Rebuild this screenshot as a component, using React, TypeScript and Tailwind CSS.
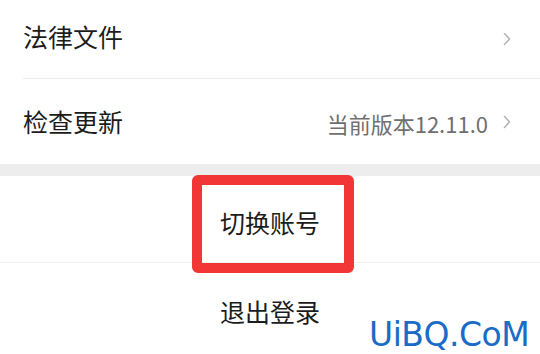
import React from "react";

const Chevron = () => (
  <svg width="8" height="14" viewBox="0 0 8 14" className="shrink-0">
    <path d="M1.5 1.5 L6.5 7 L1.5 12.5" fill="none" stroke="#b5b5b5" strokeWidth="1.6" strokeLinecap="round" strokeLinejoin="round" />
  </svg>
);

export default function App() {
  const font = { fontFamily: '"Noto Sans CJK SC", "Noto Sans", sans-serif' };
  return (
    <div className="w-[540px] h-[354px] bg-white overflow-hidden relative text-[#1c1c1c]" style={font}>
      <div className="flex flex-col">
        <div className="h-[78px] flex items-center pl-[23px] pr-[29px]">
          <span className="text-[25px] leading-none flex-1 pb-[6px]">法律文件</span>
          <Chevron />
        </div>
        <div className="ml-[23px] h-px bg-[#ececec]" />
        <div className="h-[85px] flex items-center pl-[23px] pr-[29px]">
          <span className="text-[25px] leading-none flex-1">检查更新</span>
          <span className="text-[22px] leading-none text-[#707070] mr-[15px] pt-[2px]">当前版本12.11.0</span>
          <Chevron />
        </div>
        <div className="h-[12px] bg-[#ededed]" />
        <div className="h-[86px] flex items-center justify-center">
          <span className="text-[25px] leading-none pt-[6px]">切换账号</span>
        </div>
        <div className="h-px bg-[#f0f0f0]" />
        <div className="h-[90px] flex items-start justify-center pt-[36px]">
          <span className="text-[25px] leading-none">退出登录</span>
        </div>
      </div>
      <div className="absolute left-[192px] top-[175px] w-[162px] h-[98px] border-[10px] border-[#f23535] rounded-[6px]" />
      <div
        className="absolute left-[369px] top-[318px] text-[33px] leading-none text-[#1b6cc6]"
        style={{ fontFamily: '"DejaVu Sans", sans-serif', letterSpacing: "-0.5px" }}
      >
        UiBQ.CoM
      </div>
    </div>
  );
}
